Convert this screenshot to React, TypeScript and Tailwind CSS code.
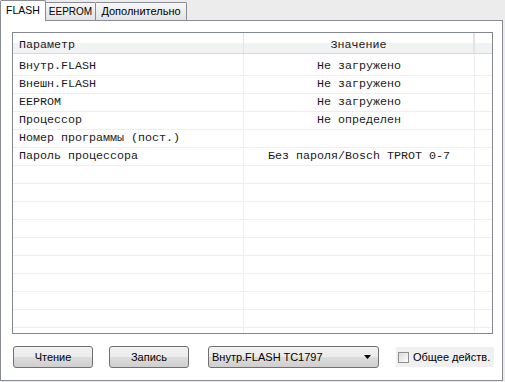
import React from "react";

const rows: { name: string; value: string }[] = [
  { name: "Внутр.FLASH", value: "Не загружено" },
  { name: "Внешн.FLASH", value: "Не загружено" },
  { name: "EEPROM", value: "Не загружено" },
  { name: "Процессор", value: "Не определен" },
  { name: "Номер программы (пост.)", value: "" },
  { name: "Пароль процессора", value: "Без пароля/Bosch TPROT 0-7" },
];

const emptyRows = Array.from({ length: 10 }, () => ({ name: "", value: "" }));

const Tab = ({
  label,
  active,
  width,
  size = "text-[11px]",
}: {
  label: string;
  active?: boolean;
  width: string;
  size?: string;
}) =>
  active ? (
    <div
      className={`${width} ${size} h-[21px] relative z-10 -mb-px border border-b-0 border-[#898c95] rounded-t-[2px] bg-white flex items-center justify-center pb-[1px] text-black`}
    >
      {label}
    </div>
  ) : (
    <div
      className={`${width} ${size} h-[18px] border-t border-r border-[#898c95] rounded-tr-[2px] bg-[linear-gradient(#f7f7f7,#e3e3e3)] flex items-center justify-center text-black`}
    >
      {label}
    </div>
  );

const Button = ({ label }: { label: string }) => (
  <button className="w-[80px] h-[22px] rounded-[3px] border border-[#707070] bg-[linear-gradient(#f2f2f2_0%,#ebebeb_50%,#dddddd_50%,#cfcfcf_100%)] text-[11px] text-black flex items-center justify-center">
    {label}
  </button>
);

export default function App() {
  const allRows = [...rows, ...emptyRows];
  return (
    <div className="w-[505px] h-[382px] bg-[#ececec] overflow-hidden font-['Liberation_Sans',Arial,sans-serif]">
      {/* Tabs */}
      <div className="h-[20px] flex items-end">
        <Tab label="FLASH" active width="w-[46px]" size="text-[10.5px]" />
        <Tab label="EEPROM" width="w-[50px]" size="text-[10px]" />
        <Tab label="Дополнительно" width="w-[91px]" />
      </div>

      {/* Page */}
      <div className="w-[503px] h-[361px] border border-[#898c95] bg-white pl-[11px] pt-[11px] flex flex-col">
        {/* Grid */}
        <div className="w-[481px] h-[302px] border border-[#828790] overflow-hidden font-['Liberation_Mono','Courier_New',monospace] text-[11.67px] text-[#1a1a1a]">
          <div className="flex h-[21px] border-b border-[#d9dadc] bg-[linear-gradient(#ffffff_50%,#f1f2f4_50%)]">
            <div className="w-[231px] border-r border-[#e3e3e3] flex items-center pl-[6px] pt-[5px]">Параметр</div>
            <div className="w-[231px] border-r-2 border-[#e3e3e3] flex items-center justify-center pt-[5px]">Значение</div>
            <div className="w-[17px]" />
          </div>
          <div className="h-[4px] flex">
            <div className="w-[231px] border-r border-[#eeeeee]" />
            <div className="w-[231px] border-r border-[#eeeeee]" />
          </div>
          {allRows.map((r, i) => (
            <div key={i} className="flex h-[18px] border-b border-[#eeeeee]">
              <div className="w-[231px] border-r border-[#eeeeee] flex items-center pl-[6px] pt-[1px] whitespace-pre">{r.name}</div>
              <div className="w-[231px] border-r border-[#eeeeee] flex items-center justify-center pt-[1px] whitespace-pre">{r.value}</div>
              <div className="w-[17px]" />
            </div>
          ))}
        </div>

        {/* Bottom controls */}
        <div className="mt-[12px] pl-[1px] flex items-center h-[22px]">
          <Button label="Чтение" />
          <div className="ml-[16px]">
            <Button label="Запись" />
          </div>
          <div className="ml-[19px] w-[171px] h-[22px] rounded-[3px] border border-[#707070] bg-[linear-gradient(#f2f2f2_0%,#ebebeb_50%,#dddddd_50%,#cfcfcf_100%)] flex items-center pl-[3px] pr-[7px] text-[11px] text-black">
            <span className="flex-1">Внутр.FLASH TC1797</span>
            <svg width="7" height="4" viewBox="0 0 7 4">
              <path d="M0 0h7L3.5 4z" fill="#000" />
            </svg>
          </div>
          <div className="ml-[17px] w-[98px] h-[20px] bg-[#f0f0f0] flex items-center pl-[2px] text-[11px] text-black">
            <div className="w-[11px] h-[11px] border border-[#8f8f8f] bg-[linear-gradient(135deg,#dcdcdc,#fbfbfb)]" />
            <span className="ml-[4px]">Общее действ.</span>
          </div>
        </div>
      </div>
    </div>
  );
}
